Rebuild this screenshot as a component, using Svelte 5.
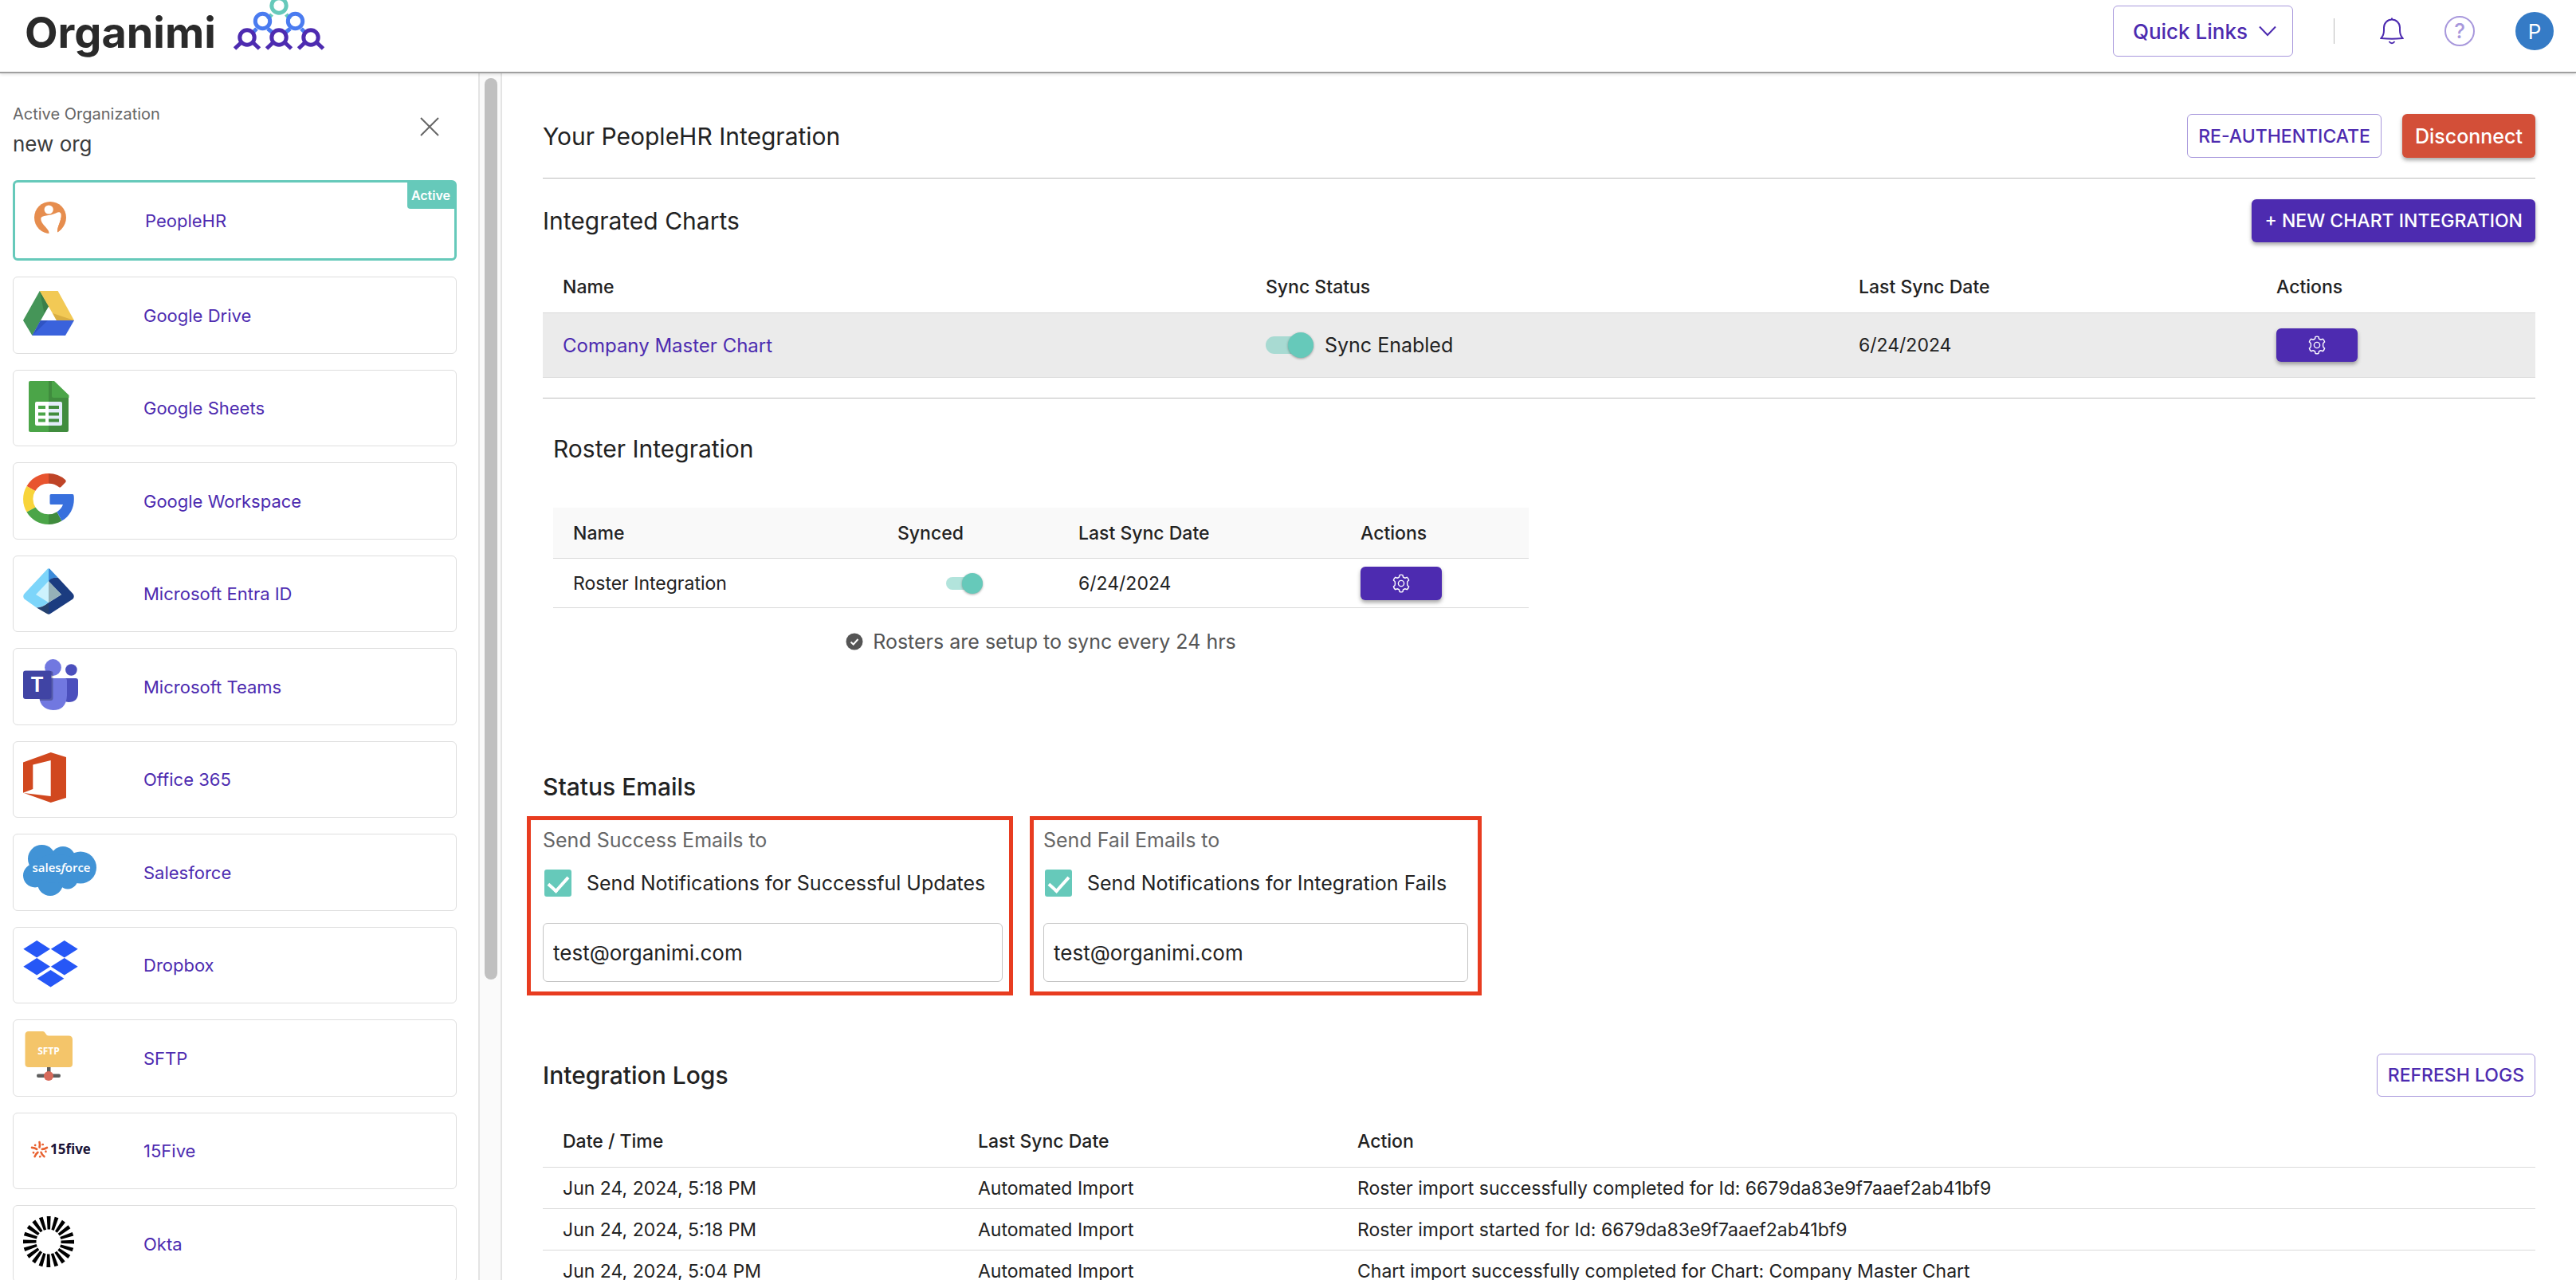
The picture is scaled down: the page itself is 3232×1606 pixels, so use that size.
<!--
  Integration settings page

  Top bar, list of available integrations on the left and the settings
  of the selected integration (PeopleHR) on the right.
-->
<script lang="ts">
  interface Integration {
    id: string;
    name: string;
    width: number;
  }

  interface LogEntry {
    time: string;
    type: string;
    action: string;
  }

  // width is the width of the logo, every logo is 64 high
  const integrations: Integration[] = [
    { id: 'peoplehr', name: 'PeopleHR', width: 64 },
    { id: 'drive', name: 'Google Drive', width: 64 },
    { id: 'sheets', name: 'Google Sheets', width: 64 },
    { id: 'workspace', name: 'Google Workspace', width: 64 },
    { id: 'entra', name: 'Microsoft Entra ID', width: 64 },
    { id: 'teams', name: 'Microsoft Teams', width: 70 },
    { id: 'office', name: 'Office 365', width: 64 },
    { id: 'salesforce', name: 'Salesforce', width: 92 },
    { id: 'dropbox', name: 'Dropbox', width: 70 },
    { id: 'sftp', name: 'SFTP', width: 64 },
    { id: '15five', name: '15Five', width: 92 },
    { id: 'okta', name: 'Okta', width: 64 },
  ];

  const logs: LogEntry[] = [
    {
      time: 'Jun 24, 2024, 5:18 PM',
      type: 'Automated Import',
      action: 'Roster import successfully completed for Id: 6679da83e9f7aaef2ab41bf9',
    },
    {
      time: 'Jun 24, 2024, 5:18 PM',
      type: 'Automated Import',
      action: 'Roster import started for Id: 6679da83e9f7aaef2ab41bf9',
    },
    {
      time: 'Jun 24, 2024, 5:04 PM',
      type: 'Automated Import',
      action: 'Chart import successfully completed for Chart: Company Master Chart',
    },
  ];

  const oktaRays = Array.from({ length: 20 }, (_, i) => i * 18);
  const starRays = [0, 72, 144, 216, 288];

  let activeId = $state('peoplehr');
  let chartSync = $state(true);
  let rosterSync = $state(true);
  let notifySuccess = $state(true);
  let notifyFail = $state(true);
  let successEmail = $state('test@organimi.com');
  let failEmail = $state('test@organimi.com');
</script>

{#snippet gear()}
  <svg class="gear" viewBox="0 0 24 24" aria-hidden="true">
    <path
      d="M9.6 3.9 10 1.6Q12 .6 14 1.6L14.4 3.9Q15.6 4.9 17 5.2L19.3 4.4Q21 5.6 21.6 8L19.9 9.6Q19.3 12 19.9 14.4L21.6 16Q21 18.4 19.3 19.6L17 18.8Q15.6 19.1 14.4 20.1L14 22.4Q12 23.4 10 22.4L9.6 20.1Q8.4 19.1 7 18.8L4.7 19.6Q3 18.4 2.4 16L4.1 14.4Q4.7 12 4.1 9.6L2.4 8Q3 5.6 4.7 4.4L7 5.2Q8.4 4.9 9.6 3.9Z"
    />
    <circle cx="12" cy="12" r="3.6" />
  </svg>
{/snippet}

{#snippet logo(id: string)}
  {#if id === 'peoplehr'}
    <circle cx="32" cy="31" r="20" fill="#e68d4e" />
    <path fill="#fff" d="M20.3 32C20.5 28 32 29 39 25.500C44 23 46.500 24.500 45.500 31 44.500 38 41 42 41 49Q42 50.500 44 49V54H29.500Q31.500 51 30 48C28 43 20 39 20.300 32Z" />
    <path fill="#e68d4e" d="M41 49.200C41 42 44.500 38 45.500 31L50 31Q51 43 41.800 49.200Z" />
    <circle cx="30.200" cy="21" r="5.600" fill="#fff" />
  {:else if id === 'drive'}
    <path fill="#459558" d="M20.800 4 32.200 23 11.400 60 0 41Z" />
    <path fill="#3a7f4a" d="M20.800 4 32.200 23 26.500 32Z" />
    <path fill="#f2c955" d="M20.800 4H43.600L64 41H42Z" />
    <path fill="#d9ae42" d="M37 32 64 41H42Z" />
    <path fill="#3a62dc" d="M22 41H64L53 60H11.400Z" />
    <path fill="#2f54c4" d="M22 41H31L11.400 60Z" />
  {:else if id === 'sheets'}
    <path fill="#4ba548" d="M9 0H32V64H9Q7 64 7 62V2Q7 0 9 0Z" />
    <path fill="#408c3e" d="M32 0H38L57 18V62Q57 64 55 64H32Z" />
    <path fill="#4ba548" d="M39 0 57.500 18V21H38Q36 21 36 19V0Z" />
    <path fill="#fff" d="M17 26H32V56H17Q15 56 15 54V28Q15 26 17 26Z" />
    <path fill="#e3ecfa" d="M32 26H47Q49 26 49 28V54Q49 56 47 56H32Z" />
    <path fill="#4ba548" d="M19 31H28V35H19ZM19 39.500H28V43.500H19ZM19 47.500H28V51.500H19Z" />
    <path fill="#408c3e" d="M32 31H45V35H32ZM32 39.500H45V43.500H32ZM32 47.500H45V51.500H32Z" />
  {:else if id === 'workspace'}
    <path fill="#e8542f" d="M4.500 16A32 32 0 0 1 32 0V12.700A19.300 19.300 0 0 0 15.200 22Z" />
    <path fill="#bf4427" d="M32 0A32 32 0 0 1 53 8Q54.500 9.500 53.300 11L47.500 17Q46 18 44.800 17A19.300 19.300 0 0 0 32 12.700Z" />
    <path fill="#f8d43a" d="M4.500 16 15.200 22A19.300 19.300 0 0 0 15.500 42.500L4.500 48.500A32 32 0 0 1 4.500 16Z" />
    <path fill="#4ba548" d="M4.500 48.500 15.500 42.500A19.300 19.300 0 0 0 32 51.300V64A32 32 0 0 1 4.500 48.500Z" />
    <path fill="#408c3e" d="M32 51.300A19.300 19.300 0 0 0 42.500 48.200L48.500 59.500A32 32 0 0 1 32 64Z" />
    <path fill="#3870dd" d="M35 26H62Q63.500 26 63.600 28C65 41 60 53 48.500 59.500L42.500 48.200Q48 44.500 50 39H35Q33.500 39 33.500 37.500V27.500Q33.500 26 35 26Z" />
  {:else if id === 'entra'}
    <path fill="#7dd5fa" d="M32 2.300Q30.500 2.300 29 4.500L1.500 34Q-1 37 1.500 40.500L17 51.500Q23 51.500 32 45Z" />
    <path fill="#3b8ad9" d="M32 2.300Q33.500 2.300 35 4.500L44 14Q36 13 32 19Z" />
    <path fill="#1b3c80" d="M44 14 62.500 34Q65 37 62.500 40.500L34.500 58.800Q33 59.800 32 59.800V45L48 35 32 18.500Q35 13 44 14Z" />
    <path fill="#26426f" d="M17 51.500Q24 51.500 32 45V59.800Q30.500 59.600 29 58.600Z" />
    <path fill="#cdf2fd" d="M32 18V45L16 35Z" />
    <path fill="#95b1b8" d="M32 18 48 35 32 45Z" />
  {:else if id === 'teams'}
    <circle cx="60.400" cy="13.500" r="7.300" fill="#4b4fbd" />
    <path fill="#4b4fbd" d="M50 24H66Q69 24 69 27V42Q69 54 57 54 50 54 50 46Z" />
    <circle cx="37.500" cy="10.500" r="10.400" fill="#7178e0" />
    <path fill="#7178e0" d="M22 24H52Q55 24 55 27V46Q54 64 37.500 64 21 63 20 46Z" />
    <path fill="#000" opacity=".25" d="M22 15H35Q37.500 15 37.500 18V49Q37.500 52 34.500 52H21Z" />
    <rect y="14.500" width="35.500" height="35.500" rx="3" fill="#4044a4" />
    <text class="teams-letter" x="17.500" y="41" text-anchor="middle">T</text>
  {:else if id === 'office'}
    <path fill="#d1481f" d="M0 12.500 34.700 0 54 6V57L34.700 63 1 51 34.700 55V10L12.300 15.500V46L0 50.800Z" />
  {:else if id === 'salesforce'}
    <g fill="#4193d6">
      <circle cx="23.500" cy="17.500" r="17.500" />
      <circle cx="50" cy="17.500" r="15.500" />
      <circle cx="72" cy="28.500" r="20" />
      <circle cx="15" cy="38.500" r="15" />
      <circle cx="34" cy="48" r="16" />
      <circle cx="56" cy="43" r="12.500" />
      <ellipse cx="42" cy="30" rx="32" ry="18" />
    </g>
    <text class="cloud-text" x="48" y="34" text-anchor="middle">sales<tspan font-style="italic">f</tspan>orce</text>
  {:else if id === 'dropbox'}
    <path
      fill="#2657f6"
      d="M17.200 3 34 13.700 17.200 24.400.300 13.700ZM51.800 3 68.700 13.700 51.800 24.400 34.800 13.700ZM17.200 25 34 35.700 17.200 46.400.300 35.700ZM51.800 25 68.700 35.700 51.800 46.400 34.800 35.700ZM34.500 40 51.400 50.700 34.500 61.400 17.600 50.700Z"
    />
  {:else if id === 'sftp'}
    <path fill="#f4c56a" d="M7 1H25Q27 1 28 3.500T32 6.500H57Q62 6.500 62 11.500V42Q62 46 58 46H7Q2.500 46 2.500 42V5.500Q2.500 1 7 1Z" />
    <path fill="#5d5d5d" d="M30 46H34.500V54.500H45Q47 54.500 47 56.700T45 59H19Q17 59 17 56.700T19 54.500H30Z" />
    <circle cx="32" cy="57" r="6" fill="#d76a5b" />
    <text class="sftp-text" x="32" y="30" text-anchor="middle">SFTP</text>
  {:else if id === '15five'}
    <g fill="none" stroke="#e8612f" stroke-width="2.600" stroke-linecap="round">
      {#each starRays as angle}
        <path d="M20.500 23Q21.500 26.500 20.500 29.500M24.500 26 24.800 26" transform="rotate({angle} 20.500 33)" />
      {/each}
    </g>
    <text class="five-text" x="34" y="38">15five</text>
  {:else}
    {#each oktaRays as angle}
      <path d="M29.700 0H34.600L34 16.500H30.600Z" transform="rotate({angle} 32 32)" />
    {/each}
  {/if}
{/snippet}

<div class="page">
  <header class="topbar">
    <a class="brand" href="/" aria-label="Organimi home">
      <span>Organimi</span>
      <svg class="brand-mark" viewBox="0 0 116 64" aria-hidden="true">
        <g fill="none" stroke-width="5">
          <g stroke="#66c9ba">
            <path d="M49 18 44 24M67 18 72 24" />
            <circle cx="58" cy="7" r="9.200" />
          </g>
          <g stroke="#4a7bf0">
            <path d="M30 36 25 41M44 36 50 41M72 36 66 41M86 36 91 41" />
            <circle cx="37.500" cy="26.500" r="9.200" />
            <circle cx="78.500" cy="26.500" r="9.200" />
          </g>
          <g stroke="#4d2bb0">
            <path d="M11 53 2.500 61M25 53 33.500 61M51 53 42.500 61M65 53 73.500 61M91 53 82.500 61M105 53 113.500 61" />
            <circle cx="18" cy="47" r="9.200" />
            <circle cx="58" cy="47" r="9.200" />
            <circle cx="98" cy="47" r="9.200" />
          </g>
        </g>
      </svg>
    </a>

    <div class="topbar-actions">
      <button class="quick-links">
        Quick Links
        <svg width="22" height="14" viewBox="0 0 22 14" aria-hidden="true"><path d="M1 1.500 11 12 21 1.500" /></svg>
      </button>
      <span class="separator"></span>
      <button class="icon-btn" aria-label="Notifications">
        <svg width="30" height="34" viewBox="0 0 30 34" aria-hidden="true">
          <path d="M15 .500V3M1.500 26Q5 22 5 16V12.500A10 10 0 0 1 25 12.500V16Q25 22 28.500 26 21 26.800 15 26.800T1.500 26ZM11.500 30Q15 34.500 18.500 30" />
        </svg>
      </button>
      <button class="help-btn" aria-label="Help">?</button>
      <button class="avatar" aria-label="Account">P</button>
    </div>
  </header>

  <div class="body">
    <aside class="sidebar">
      <div class="org">
        <div>
          <div class="org-label">Active Organization</div>
          <div class="org-name">new org</div>
        </div>
        <button class="close-btn" aria-label="Close">
          <svg width="24" height="24" viewBox="0 0 24 24" aria-hidden="true"><path d="M1 1 23 23M23 1 1 23" /></svg>
        </button>
      </div>

      <nav class="integrations">
        {#each integrations as item (item.id)}
          <button class="card" class:active={activeId === item.id} onclick={() => (activeId = item.id)}>
            <span class="card-logo">
              <svg width={item.width} height="64" viewBox="0 0 {item.width} 64" aria-hidden="true">
                {@render logo(item.id)}
              </svg>
            </span>
            <span class="card-name">{item.name}</span>
            {#if activeId === item.id}
              <span class="badge">Active</span>
            {/if}
          </button>
        {/each}
      </nav>
    </aside>

    <div class="scrollbar"><div class="thumb"></div></div>

    <main class="content">
      <div class="row title-row">
        <h1>Your PeopleHR Integration</h1>
        <div class="buttons">
          <button class="btn outlined">RE-AUTHENTICATE</button>
          <button class="btn danger">Disconnect</button>
        </div>
      </div>

      <section class="charts">
        <div class="row">
          <h2>Integrated Charts</h2>
          <button class="btn primary">+ NEW CHART INTEGRATION</button>
        </div>
        <table class="charts-table">
          <colgroup>
            <col />
            <col class="c-status" />
            <col class="c-date" />
            <col class="c-actions" />
          </colgroup>
          <thead>
            <tr><th>Name</th><th>Sync Status</th><th>Last Sync Date</th><th>Actions</th></tr>
          </thead>
          <tbody>
            <tr>
              <td><a href="#chart">Company Master Chart</a></td>
              <td>
                <label class="switch-label">
                  <input class="switch" type="checkbox" role="switch" bind:checked={chartSync} />
                  {chartSync ? 'Sync Enabled' : 'Sync Disabled'}
                </label>
              </td>
              <td>6/24/2024</td>
              <td><button class="gear-btn" aria-label="Chart settings">{@render gear()}</button></td>
            </tr>
          </tbody>
        </table>
      </section>

      <section class="roster">
        <h2>Roster Integration</h2>
        <table class="roster-table">
          <colgroup>
            <col />
            <col class="r-synced" />
            <col class="r-date" />
            <col class="r-actions" />
          </colgroup>
          <thead>
            <tr><th>Name</th><th>Synced</th><th>Last Sync Date</th><th>Actions</th></tr>
          </thead>
          <tbody>
            <tr>
              <td>Roster Integration</td>
              <td class="synced-cell">
                <input class="switch small" type="checkbox" role="switch" aria-label="Roster synced" bind:checked={rosterSync} />
              </td>
              <td>6/24/2024</td>
              <td><button class="gear-btn" aria-label="Roster settings">{@render gear()}</button></td>
            </tr>
          </tbody>
        </table>
        <p class="note">
          <svg width="22" height="22" viewBox="0 0 22 22" aria-hidden="true">
            <circle cx="11" cy="11" r="10.500" fill="#555" />
            <path d="M6.500 11.500 9.700 14.500 15.500 8" fill="none" stroke="#fff" stroke-width="2" />
          </svg>
          Rosters are setup to sync every 24 hrs
        </p>
      </section>

      <section class="emails">
        <h3>Status Emails</h3>
        <div class="email-boxes">
          <div class="email-box success">
            <label class="caption" for="success-email">Send Success Emails to</label>
            <label class="check">
              <input type="checkbox" bind:checked={notifySuccess} />
              Send Notifications for Successful Updates
            </label>
            <input id="success-email" class="email" type="text" bind:value={successEmail} />
          </div>
          <div class="email-box fail">
            <label class="caption" for="fail-email">Send Fail Emails to</label>
            <label class="check">
              <input type="checkbox" bind:checked={notifyFail} />
              Send Notifications for Integration Fails
            </label>
            <input id="fail-email" class="email" type="text" bind:value={failEmail} />
          </div>
        </div>
      </section>

      <section class="logs">
        <div class="row">
          <h3>Integration Logs</h3>
          <button class="btn outlined">REFRESH LOGS</button>
        </div>
        <table class="logs-table">
          <colgroup>
            <col class="l-time" />
            <col class="l-type" />
            <col />
          </colgroup>
          <thead>
            <tr><th>Date / Time</th><th>Last Sync Date</th><th>Action</th></tr>
          </thead>
          <tbody>
            {#each logs as entry}
              <tr><td>{entry.time}</td><td>{entry.type}</td><td>{entry.action}</td></tr>
            {/each}
          </tbody>
        </table>
      </section>
    </main>
  </div>
</div>

<style>
  :global(body) {
    background: #fff;
  }

  .page {
    --purple: #4d2bb0;
    --purple-light: #a898dc;
    --teal: #66c9ba;
    display: flex;
    flex-direction: column;
    height: 100vh;
    overflow: hidden;
    font-family: Inter, 'Open Sans', sans-serif;
    font-size: 23px;
    color: #222;
  }

  .page * {
    box-sizing: border-box;
  }

  button,
  input {
    font: inherit;
    color: inherit;
    margin: 0;
  }

  button {
    padding: 0;
    background: none;
    border: none;
    cursor: pointer;
  }

  h1,
  h2,
  h3,
  p {
    margin: 0;
  }

  h1,
  h2,
  h3 {
    font-size: 30px;
    line-height: 40px;
    font-weight: 400;
  }

  h3 {
    font-weight: 500;
  }

  svg {
    display: block;
    flex: none;
  }

  /* Top bar */
  .topbar {
    position: relative;
    display: flex;
    flex: none;
    justify-content: space-between;
    height: 92px;
    padding: 0 28px 0 31px;
    border-bottom: 2px solid #a0a0a0;
    box-shadow: 0 1px 4px rgba(0, 0, 0, 0.15);
  }

  .brand {
    display: flex;
    gap: 21px;
    color: #2a2a2a;
    font-size: 54px;
    line-height: 82px;
    font-weight: 700;
    text-decoration: none;
  }

  .brand-mark {
    width: 116px;
    height: 64px;
  }

  .topbar-actions {
    display: flex;
    align-items: center;
    height: 78px;
    color: var(--purple);
  }

  .topbar-actions svg {
    fill: none;
    stroke: var(--purple);
    stroke-width: 2;
  }

  .quick-links {
    display: flex;
    align-items: center;
    gap: 14px;
    height: 64px;
    padding: 0 20px 0 24px;
    border: 1px solid var(--purple-light);
    border-radius: 6px;
    font-size: 26px;
    font-weight: 500;
  }

  .separator {
    width: 1px;
    height: 32px;
    margin: 0 57px 0 51px;
    background: #bbb;
  }

  .help-btn {
    width: 38px;
    height: 38px;
    margin: 0 51px;
    border: 2px solid var(--purple-light);
    border-radius: 50%;
    color: var(--purple-light);
    font-size: 26px;
    line-height: 32px;
    font-weight: 500;
  }

  .avatar {
    width: 48px;
    height: 48px;
    border-radius: 50%;
    background: #357bc6;
    color: #fff;
    font-size: 26px;
  }

  .body {
    display: flex;
    flex: 1;
    min-height: 0;
  }

  /* Sidebar */
  .sidebar {
    flex: none;
    width: 600px;
    padding: 34px 27px 0 16px;
    overflow: hidden;
  }

  .org {
    display: flex;
    justify-content: space-between;
    padding-right: 22px;
    height: 100px;
  }

  .org-label {
    color: #666;
    font-size: 20px;
    line-height: 34px;
  }

  .org-name {
    color: #3c3c3c;
    font-size: 26px;
    line-height: 42px;
  }

  .close-btn {
    align-self: flex-start;
    padding-top: 21px;
  }

  .close-btn svg {
    fill: none;
    stroke: #666;
    stroke-width: 2;
  }

  .integrations {
    display: grid;
    grid-template-rows: 101px;
    grid-auto-rows: 97px 96px;
    gap: 20px;
  }

  .card {
    position: relative;
    display: flex;
    align-items: center;
    padding: 0 12px;
    border: 1px solid #dedede;
    border-radius: 6px;
    color: var(--purple);
    font-size: 22px;
    text-align: left;
  }

  .card.active {
    border: 3px solid var(--teal);
  }

  .card-logo {
    flex: none;
    align-self: flex-start;
    width: 151px;
    padding-top: 13px;
  }

  .badge {
    position: absolute;
    top: 0;
    right: 0;
    padding: 0 5px;
    border-radius: 0 0 0 4px;
    background: var(--teal);
    color: #fff;
    font-size: 16px;
    line-height: 33px;
    font-weight: 600;
  }

  .teams-letter {
    fill: #fff;
    font-size: 25px;
    font-weight: 700;
  }

  .cloud-text {
    fill: #fff;
    font-family: 'Open Sans', sans-serif;
    font-size: 15px;
    font-weight: 600;
  }

  .sftp-text {
    fill: #fff;
    font-family: 'Open Sans', sans-serif;
    font-size: 12px;
    font-weight: 700;
  }

  .five-text {
    fill: #1c1538;
    font-family: 'Open Sans', sans-serif;
    font-size: 17px;
    font-weight: 700;
  }

  .scrollbar {
    flex: none;
    width: 30px;
    padding: 6px 6px 0;
    background: #fafafa;
    border: solid #e4e4e4;
    border-width: 0 2px;
  }

  .thumb {
    height: 75%;
    width: 16px;
    border-radius: 8px;
    background: #c0c0c0;
  }

  /* Main content */
  .content {
    flex: 1;
    min-width: 0;
    padding: 51px 51px 0;
    overflow: hidden;
  }

  .row {
    display: flex;
    align-items: center;
    justify-content: space-between;
  }

  .title-row {
    padding-bottom: 25px;
    border-bottom: 1px solid #bdbdbd;
  }

  .buttons {
    display: flex;
    gap: 26px;
  }

  .btn {
    height: 54px;
    padding: 0 16px;
    border-radius: 6px;
    font-size: 23px;
    font-weight: 500;
  }

  .title-row .btn {
    height: 55px;
  }

  .outlined {
    padding: 0 13px;
    border: 1px solid var(--purple-light);
    color: var(--purple);
  }

  .primary,
  .danger,
  .gear-btn {
    box-shadow: 0 3px 5px rgba(0, 0, 0, 0.35);
    color: #fff;
  }

  .primary,
  .gear-btn {
    background: var(--purple);
  }

  .danger {
    background: #d34f38;
    font-size: 25px;
  }

  table {
    width: 100%;
    border-collapse: separate;
    border-spacing: 0;
    table-layout: fixed;
  }

  th,
  td {
    padding: 0 25px;
    border-bottom: 1px solid #dadada;
    text-align: left;
    font-weight: 400;
  }

  th {
    height: 66px;
    font-weight: 500;
  }

  .charts {
    padding: 26px 0 25px;
    border-bottom: 1px solid #bdbdbd;
  }

  .charts-table,
  .logs-table {
    margin-top: 23px;
  }

  .charts-table td {
    height: 81px;
    background: #ebebeb;
  }

  .charts-table a {
    color: var(--purple);
    font-size: 24px;
    text-decoration: none;
  }

  .c-status {
    width: 744px;
  }

  .c-date {
    width: 524px;
  }

  .c-actions {
    width: 350px;
  }

  .switch-label {
    display: flex;
    align-items: center;
    gap: 14px;
    font-size: 25px;
  }

  /* Toggle: the input is the track, ::before the thumb */
  .switch {
    appearance: none;
    display: block;
    position: relative;
    width: 60px;
    height: 22px;
    border-radius: 11px;
    background: rgba(102, 201, 186, 0.5);
    cursor: pointer;
  }

  .switch::before {
    content: '';
    position: absolute;
    top: -5px;
    left: 0;
    width: 32px;
    height: 32px;
    border-radius: 50%;
    background: #fafafa;
    box-shadow: 0 1px 3px rgba(0, 0, 0, 0.35);
  }

  .switch:checked::before {
    left: 28px;
    background: var(--teal);
  }

  .switch.small {
    width: 46px;
    height: 16px;
    border-radius: 8px;
  }

  .switch.small::before {
    width: 26px;
    height: 26px;
  }

  .switch.small:checked::before {
    left: 20px;
  }

  .gear-btn {
    display: flex;
    align-items: center;
    justify-content: center;
    width: 102px;
    height: 42px;
    border-radius: 6px;
  }

  .gear {
    width: 24px;
    height: 24px;
    fill: none;
    stroke: #fff;
    stroke-width: 1.4;
  }

  /* Roster */
  .roster {
    width: 1224px;
    margin: 43px 0 0 13px;
  }

  .roster-table {
    margin-top: 54px;
  }

  .roster-table th {
    height: 64px;
    background: #f9f9f9;
  }

  .roster-table td {
    height: 62px;
  }

  .r-synced {
    width: 227px;
  }

  .r-date {
    width: 354px;
  }

  .r-actions {
    width: 236px;
  }

  .synced-cell .switch {
    margin-left: 61px;
  }

  .note {
    display: flex;
    align-items: center;
    justify-content: center;
    gap: 12px;
    margin-top: 24px;
    color: #555;
    font-size: 25px;
    line-height: 36px;
  }

  /* Status emails */
  .emails {
    margin-top: 144px;
  }

  .email-boxes {
    display: flex;
    gap: 21px;
    margin: 17px 0 0 -20px;
  }

  .email-box {
    padding: 7px 12px 12px;
    border: 5px solid #e83c20;
  }

  .email-box.success {
    width: 610px;
    padding: 7px 8px 12px 15px;
  }

  .email-box.fail {
    width: 567px;
  }

  .caption {
    display: block;
    color: #666;
    font-size: 25px;
    line-height: 36px;
  }

  .check {
    display: flex;
    align-items: center;
    gap: 19px;
    margin: 19px 0 33px 2px;
    font-size: 25px;
    line-height: 34px;
    white-space: nowrap;
  }

  .check input {
    appearance: none;
    display: flex;
    justify-content: center;
    flex: none;
    width: 34px;
    height: 34px;
    border: 2px solid var(--teal);
    border-radius: 3px;
    cursor: pointer;
  }

  .check input:checked {
    background: var(--teal);
  }

  .check input:checked::before {
    content: '';
    width: 11px;
    height: 21px;
    margin-top: 1px;
    border: solid #fff;
    border-width: 0 4px 4px 0;
    transform: rotate(42deg);
  }

  .email {
    display: block;
    width: 100%;
    height: 74px;
    padding: 0 12px;
    border: 1px solid #c4c4c4;
    border-radius: 6px;
    background: #fff;
    font-size: 26px;
  }

  /* Logs */
  .logs {
    margin-top: 73px;
  }

  .logs-table td {
    height: 52px;
  }

  .l-time {
    width: 521px;
  }

  .l-type {
    width: 476px;
  }
</style>
